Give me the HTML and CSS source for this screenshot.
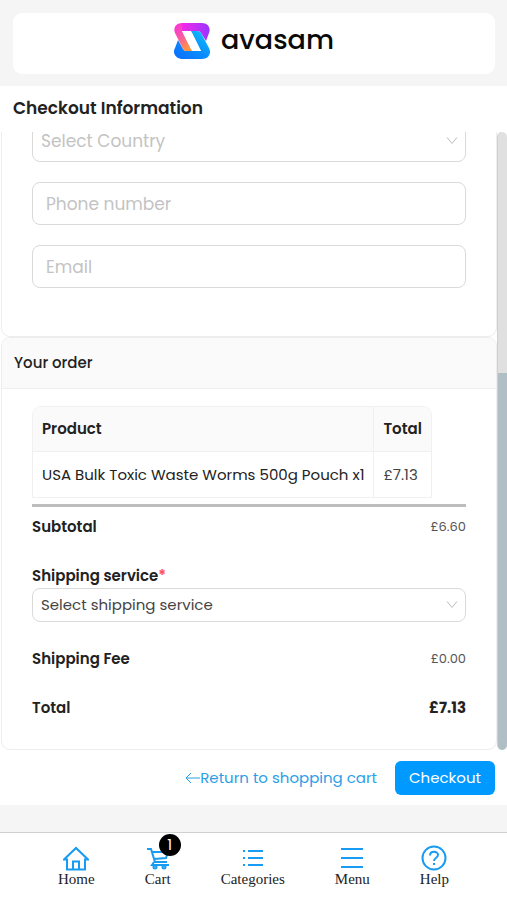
FILE: index.html
```html
<!DOCTYPE html>
<html lang="en">
<head>
<meta charset="utf-8">
<meta name="viewport" content="width=device-width, initial-scale=1">
<title>Checkout Information</title>
<link rel="stylesheet" href="styles.css">
</head>
<body>
<header class="top">
  <a class="brand" href="#" aria-label="avasam home">
    <svg class="brand-mark" viewBox="0 0 36 36" aria-hidden="true">
      <defs>
        <linearGradient id="g1" x1="0" y1="0.3" x2="1" y2="0.3"><stop offset="0" stop-color="#f62ae6"/><stop offset="1" stop-color="#9a35ff"/></linearGradient>
        <linearGradient id="g2" x1="0" y1="1" x2="1" y2="0"><stop offset="0" stop-color="#0a6cff"/><stop offset="0.5" stop-color="#0a8eff"/><stop offset="1" stop-color="#12c8f5"/></linearGradient>
        <linearGradient id="g3" x1="0" y1="0" x2="0.6" y2="1"><stop offset="0" stop-color="#fb2be4"/><stop offset="0.5" stop-color="#f857a8"/><stop offset="1" stop-color="#ff9440"/></linearGradient>
      </defs>
      <path fill="url(#g1)" d="M7 0h21c6 0 9 5 7 10l-3 8-5-8q-1-2-4-2H7z"/>
      <path fill="url(#g2)" d="M17 8h6q3 0 4 2l8 15c3 6-1 11-7 11H8c-6 0-10-6-7-11l3-8 5 9q1 2 3 2h15z"/>
      <path fill="url(#g3)" d="M8 0C2 0-1 5 1 10l8 16q1 2 3 2h6L8 8z"/>
      <path fill="#fff" d="M8 8h6q3 0 4 2l9 18h-6q-3 0-4-2z"/>
    </svg>
    <span class="brand-name">avasam</span>
  </a>
</header>

<h1 class="title">Checkout Information</h1>

<main class="scroller">
  <form class="content" id="checkout">
    <section class="panel details">
      <div class="select">
        <select class="placeholder" aria-label="Country"><option>Select Country</option></select>
        <svg class="chevron" viewBox="0 0 12 12" aria-hidden="true"><path d="M1 2.500l5 6 5-6"/></svg>
      </div>
      <input class="field" type="tel" placeholder="Phone number" aria-label="Phone number">
      <input class="field" type="email" placeholder="Email" aria-label="Email">
    </section>

    <section class="panel">
      <h2 class="panel-head">Your order</h2>
      <div class="order">
        <table class="items">
          <thead><tr><th>Product</th><th>Total</th></tr></thead>
          <tbody><tr><td>USA Bulk Toxic Waste Worms 500g Pouch x1</td><td class="price">£7.13</td></tr></tbody>
        </table>
        <hr class="rule">
        <div class="row"><strong>Subtotal</strong><span class="amount">£6.60</span></div>
        <div class="shipping">
          <label for="service">Shipping service<span class="required">*</span></label>
          <div class="select">
            <select id="service"><option>Select shipping service</option></select>
            <svg class="chevron" viewBox="0 0 12 12" aria-hidden="true"><path d="M1 2.500l5 6 5-6"/></svg>
          </div>
        </div>
        <div class="row"><strong>Shipping Fee</strong><span class="amount">£0.00</span></div>
        <div class="row total"><strong>Total</strong><strong>£7.13</strong></div>
      </div>
    </section>
  </form>
  <div class="track" aria-hidden="true"><div class="thumb"></div></div>
</main>

<div class="actions">
  <a class="back" href="#"><svg class="arrow" viewBox="0 0 15 12" aria-hidden="true"><path d="M15 6H1M6 1L1 6l5 5"/></svg>Return to shopping cart</a>
  <button class="checkout" type="submit" form="checkout">Checkout</button>
</div>

<nav class="tabs">
  <a href="#"><svg class="icon" viewBox="0 0 26 26" aria-hidden="true"><path d="M1 14.500L13 3l12 11.500H22V24.500H4V14.500zM10 24.500v-8h6v8"/></svg>Home</a>
  <a href="#"><svg class="icon" viewBox="0 0 26 26" aria-hidden="true"><path d="M2 4h4l4 13h12M7 7h16l-2 6-12 1M9 17l-2 3h17"/><circle cx="10" cy="22" r="1.500"/><circle cx="19" cy="22" r="1.500"/></svg>Cart<span class="badge">1</span></a>
  <a href="#"><svg class="icon" viewBox="0 0 26 26" aria-hidden="true"><path d="M8 6h15M8 13h15M8 20h15M3 6h2M3 13h2M3 20h2"/></svg>Categories</a>
  <a href="#"><svg class="icon" viewBox="0 0 26 26" aria-hidden="true"><path d="M2 4h22M2 13h22M2 22h22"/></svg>Menu</a>
  <a href="#"><svg class="icon" viewBox="0 0 26 26" aria-hidden="true"><circle cx="13" cy="13" r="11.500"/><path d="M9 10.500c0-5 8-5 8-.5 0 3-4 2.500-4 6M13 18v2"/></svg>Help</a>
</nav>
</body>
</html>
```
FILE: styles.css
```css
* { box-sizing: border-box; }

body {
  margin: 0;
  height: 100vh;
  display: flex;
  flex-direction: column;
  background: #fff;
  color: #222;
  font: 15px/24px Poppins, "Open Sans", sans-serif;
}

a { text-decoration: none; }

.top {
  padding: 13px 12px 12px 13px;
  background: #f5f5f5;
}

.brand {
  display: flex;
  justify-content: center;
  align-items: center;
  gap: 11px;
  padding: 10px 0 15px;
  border-radius: 9px;
  background: #fff;
  color: #090909;
}

.brand-mark { width: 36px; height: 36px; }

.brand-name {
  font: 500 27px/30px Poppins, Lato, sans-serif;
  padding-bottom: 2px;
}

.title {
  margin: 0;
  padding: 10px 13px 12px;
  font-size: 17px;
  line-height: 24px;
  font-weight: 600;
}

.scroller {
  flex: 1;
  min-height: 0;
  display: flex;
  overflow: hidden;
}

.content {
  flex: 1;
  min-width: 0;
  display: flex;
  flex-direction: column;
  justify-content: flex-end;
  padding-left: 1px;
}

.panel {
  flex: none;
  border: 1px solid #ededed;
  border-radius: 9px;
  overflow: hidden;
}

.details {
  display: flex;
  flex-direction: column;
  gap: 20px;
  padding: 20px 30px 48px;
}

.field, .select select {
  width: 100%;
  border: 1px solid #d9d9d9;
  border-radius: 8px;
  background: #fff;
  color: #444;
  font: inherit;
}

.field {
  height: 43px;
  padding: 0 13px;
  font-size: 17px;
}

.field::placeholder { color: #c3c3c3; opacity: 1; }

.select { position: relative; }

.select select {
  display: block;
  height: 34px;
  padding: 0 32px 0 8px;
  appearance: none;
}

.select .placeholder {
  height: 43px;
  color: #c3c3c3;
  font-size: 17px;
}

.chevron {
  position: absolute;
  right: 8px;
  top: 50%;
  width: 12px;
  height: 12px;
  margin-top: -6px;
  fill: none;
  stroke: #bbb;
}

.panel-head {
  margin: 0;
  padding: 13px 12px;
  border-bottom: 1px solid #f0f0f0;
  background: #fafafa;
  font-size: 15px;
  line-height: 24px;
  font-weight: 500;
}

.order { padding: 17px 30px 29px; }

.items {
  border: 1px solid #f0f0f0;
  border-radius: 9px 9px 0 0;
  border-spacing: 0;
  overflow: hidden;
}

.items th, .items td {
  height: 45px;
  padding: 0 9px;
  text-align: left;
  white-space: nowrap;
}

.items th { background: #fafafa; font-weight: 600; border-bottom: 1px solid #f0f0f0; }
.items th + th, .items td + td { border-left: 1px solid #f0f0f0; }
.items .price { color: #444; }

.rule {
  height: 3px;
  margin: 6px 0 8px;
  border: 0;
  background: #bdbdbd;
}

.row {
  display: flex;
  justify-content: space-between;
  align-items: center;
}

.row strong, .shipping label { font-weight: 600; }
.row.total strong:last-child { font-weight: 700; }

.amount { color: #555; font-size: 13px; }

.shipping { margin: 25px 0; }
.shipping label { display: block; }
.required { color: #ff4d4f; }
.total { margin-top: 25px; }

.track {
  width: 10px;
  border-radius: 5px;
  background: #e0e0e0;
  border-left: 1px solid #d0d0d0;
  overflow: hidden;
  display: flex;
  flex-direction: column;
  justify-content: flex-end;
}

.thumb { height: 61%; background: #b0bec5; }

.actions {
  display: flex;
  justify-content: flex-end;
  align-items: center;
  gap: 18px;
  padding: 11px 12px 10px;
}

.back { color: #2c9ee8; display: flex; align-items: center; }
.arrow { width: 15px; height: 12px; fill: none; stroke: #2c9ee8; }

.checkout {
  padding: 5px 14px;
  border: 0;
  border-radius: 6px;
  background: #0099ff;
  color: #fff;
  font: inherit;
}

.tabs {
  display: flex;
  justify-content: center;
  gap: 50px;
  padding: 12px 0;
  border-top: 1px solid #d0d0d0;
  background: #fff;
  box-shadow: 0 -27px 0 #f5f5f5;
  margin-top: 27px;
}

.tabs a {
  position: relative;
  display: flex;
  flex-direction: column;
  align-items: center;
  color: #222;
  font: 15px/17px "Liberation Serif", serif;
}

.icon { width: 26px; height: 26px; fill: none; stroke: #189bf2; stroke-width: 2; }

.badge {
  position: absolute;
  top: -11px;
  left: 14px;
  width: 22px;
  height: 22px;
  border-radius: 50%;
  background: #000;
  color: #fff;
  font: 15px/22px Poppins, "Open Sans", sans-serif;
  text-align: center;
}
```
